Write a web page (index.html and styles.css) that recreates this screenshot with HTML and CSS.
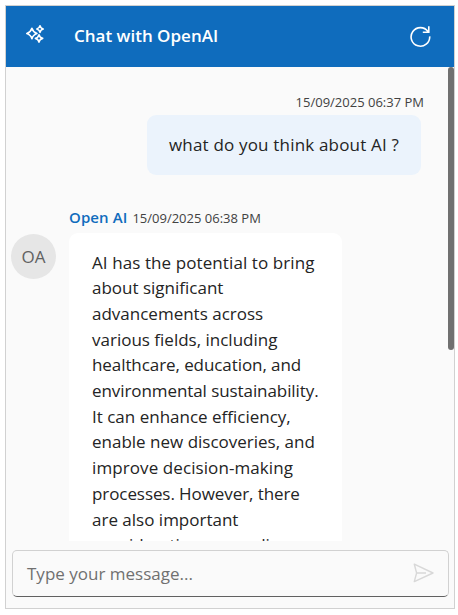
FILE: index.html
```html
<!DOCTYPE html>
<html lang="en">
<head>
<meta charset="utf-8">
<title>Chat with OpenAI</title>
<link rel="stylesheet" href="styles.css">
</head>
<body>
<main class="chat">
  <header class="header">
    <svg class="sparkle" width="20" height="20" viewBox="0 0 20 20" fill="none" stroke="#fff" stroke-width="1.6" stroke-linejoin="round">
      <path d="M6.9 4.2Q8 8.1 12 9.5Q8 10.8 6.9 14.8Q5.8 10.8 1.8 9.5Q5.8 8.1 6.9 4.2Z"/>
      <path d="M15 1.7Q15.5 4.4 18.2 5Q15.5 5.7 15 8.4Q14.4 5.7 11.8 5Q14.4 4.4 15 1.7Z"/>
      <path d="M14 10.8Q14.7 13.8 17.7 14.4Q14.7 15.1 14 18.1Q13.2 15.1 10.4 14.4Q13.2 13.8 14 10.8Z"/>
    </svg>
    <h1 class="title">Chat with OpenAI</h1>
    <svg class="refresh" width="24" height="24" viewBox="0 0 24 24" fill="none" stroke="#fff" stroke-width="1.6">
      <path d="M20 7.5A9.3 9.3 0 1 0 21.7 12.4M20.8 2.2V8.2H14.8"/>
    </svg>
  </header>
  <div class="body">
    <section class="messages">
      <article class="sent">
        <time class="time">15/09/2025 06:37 PM</time>
        <p class="bubble bubble-sent">what do you think about AI ?</p>
      </article>
      <article class="received">
        <div class="meta"><b class="author">Open AI</b><time class="time">15/09/2025 06:38 PM</time></div>
        <div class="row">
          <div class="avatar">OA</div>
          <p class="bubble bubble-received"><span class="loose">AI has the potential to bring</span><br>about significant<br>advancements across<br>various fields, including<br><span class="tight">healthcare, education, and</span><br><span class="tight">environmental sustainability.</span><br>It can enhance efficiency,<br>enable new discoveries, and<br><span class="loose">improve decision-making</span><br><span class="tight">processes. However, there</span><br>are also important<br>considerations regarding</p>
        </div>
      </article>
    </section>
    <div class="scrollbar"></div>
  </div>
  <footer class="composer">
    <span class="placeholder">Type your message...</span>
    <svg class="send" width="22" height="20" viewBox="0 0 22 20" fill="none" stroke="#d8d8d8" stroke-width="1.4" stroke-linejoin="round">
      <path d="M1.3 1.2L20 10L1.3 18.6L3.6 10ZM3.6 10H13"/>
    </svg>
  </footer>
</main>
</body>
</html>
```
FILE: styles.css
```css
* { box-sizing: border-box; }
body {
  margin: 0;
  padding: 5px;
  background: #fff;
  color: #242424;
  font-family: "Open Sans", "Noto Sans", sans-serif;
}
p, h1 { margin: 0; }
.chat {
  display: flex;
  flex-direction: column;
  width: 450px;
  height: 604px;
  border: 1px solid #d1d1d1;
  background: #fafafa;
}
.header {
  display: flex;
  flex: none;
  align-items: center;
  height: 61px;
  padding: 0 22px 0 19px;
  background: #0f6cbd;
}
.sparkle { margin-top: -5px; }
.title {
  margin: -2px 0 0 29px;
  color: #fff;
  font-size: 17px;
  font-weight: 600;
  line-height: 24px;
}
.refresh { margin: -2px 0 0 auto; }
.body {
  display: flex;
  flex: none;
  height: 474px;
  overflow: hidden;
}
.messages { flex: 1; }
.scrollbar {
  width: 6px;
  height: 283px;
  border-radius: 3px;
  background: #707070;
}
.time {
  color: #424242;
  font-size: 13px;
  line-height: 18px;
}
.sent {
  display: flex;
  flex-direction: column;
  align-items: flex-end;
  padding: 26px 24px 0 0;
}
.bubble {
  width: 274px;
  border-radius: 9px;
  font-size: 17px;
  line-height: 25.7px;
  white-space: nowrap;
}
.bubble-sent {
  height: 60px;
  margin: 4px 3px 0 0;
  padding: 17px 22px;
  background: #ebf3fc;
  letter-spacing: 0.18px;
}
.received { padding: 32px 0 0 5px; }
.meta {
  display: flex;
  align-items: baseline;
  height: 20px;
  padding-left: 58px;
  line-height: 20px;
}
.author {
  margin-right: 5px;
  color: #0f6cbd;
  font-size: 15px;
  font-weight: 600;
  letter-spacing: 0.1px;
}
.row { display: flex; margin-top: 6px; }
.avatar {
  width: 45px;
  height: 45px;
  margin: 1px 13px 0 0;
  border-radius: 50%;
  background: #e6e6e6;
  color: #616161;
  font-size: 17px;
  line-height: 45px;
  text-align: center;
}
.bubble-received {
  width: 273px;
  padding: 16.5px 23px;
  background: #fff;
  line-height: 25.7px;
}
.loose { letter-spacing: 0.09px; }
.tight { letter-spacing: -0.08px; }
.composer {
  display: flex;
  align-items: center;
  justify-content: space-between;
  height: 47px;
  margin: 9px 5px 0 6px;
  padding: 0 13px 0 14px;
  border: 1px solid #d1d1d1;
  border-bottom-color: #616161;
  border-radius: 5px;
}
.send { margin-top: -2px; }
.placeholder {
  color: #707070;
  font-size: 17px;
}
```
